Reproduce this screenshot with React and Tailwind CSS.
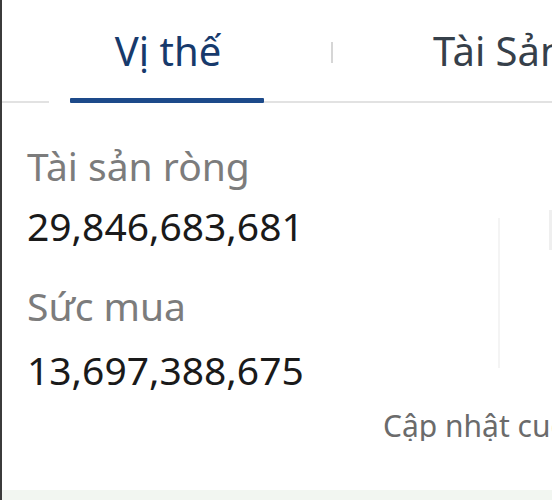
const stats = [
  { label: "Tài sản ròng", value: "29,846,683,681" },
  { label: "Sức mua", value: "13,697,388,675" },
];

export default function App() {
  return (
    <div
      className="w-[552px] h-[500px] bg-white border-l-2 border-[#3b3b3b] overflow-hidden flex flex-col"
      style={{ fontFamily: '"Noto Sans", "Open Sans", sans-serif' }}
    >
      {/* TABS */}
      <div className="h-[97px] flex items-start pt-[31px] pl-[68px] whitespace-nowrap overflow-hidden">
        <div className="shrink-0 w-[194px] pl-[2px] text-center text-[40px] leading-[40px] text-[#173a6c]">
          Vị thế
        </div>
        <div className="shrink-0 ml-[67px] mt-[11px] w-[2px] h-[21px] bg-[#d6d6d6]" />
        <div className="shrink-0 ml-[100px] text-[40px] leading-[40px] text-[#36404a]">
          Tài Sản
        </div>
      </div>

      <div className="h-[6px] flex items-end">
        <div className="w-[47px] h-[2px] bg-[#e2e2e2]" />
        <div className="w-[21px]" />
        <div className="w-[194px] h-[5px] bg-[#1d4a8a] rounded-[1px]" />
        <div className="flex-1 h-[2px] bg-[#e2e2e2]" />
      </div>

      {/* STATS */}
      <div className="flex">
        <div className="flex-1 pl-[25px] pt-[43px]">
          {stats.map((item, index) => (
            <div key={index} className={index > 0 ? "mt-[41px]" : ""}>
              <p className="text-[39px] leading-none text-[#7c7c7c]">{item.label}</p>
              <p
                className={`text-[39px] leading-none text-[#1a1a1a] ${
                  index > 0 ? "mt-[25px]" : "mt-[21px]"
                }`}
              >
                {item.value}
              </p>
            </div>
          ))}
        </div>
        <div className="mt-[115px] w-[2px] h-[150px] bg-[#f4f4f4]" />
        <div className="w-[52px] flex justify-end">
          <div className="mt-[107px] w-[3px] h-[40px] bg-[#efefef]" />
        </div>
      </div>

      <div className="mt-[22px] pl-[381px] whitespace-nowrap overflow-hidden text-[30px] leading-none text-[#6b6b6b]">
        Cập nhật cuối: 14:35
      </div>

      <div className="flex-1" />
      <div className="h-[10px] bg-[#f2f6f1]" />
    </div>
  );
}
